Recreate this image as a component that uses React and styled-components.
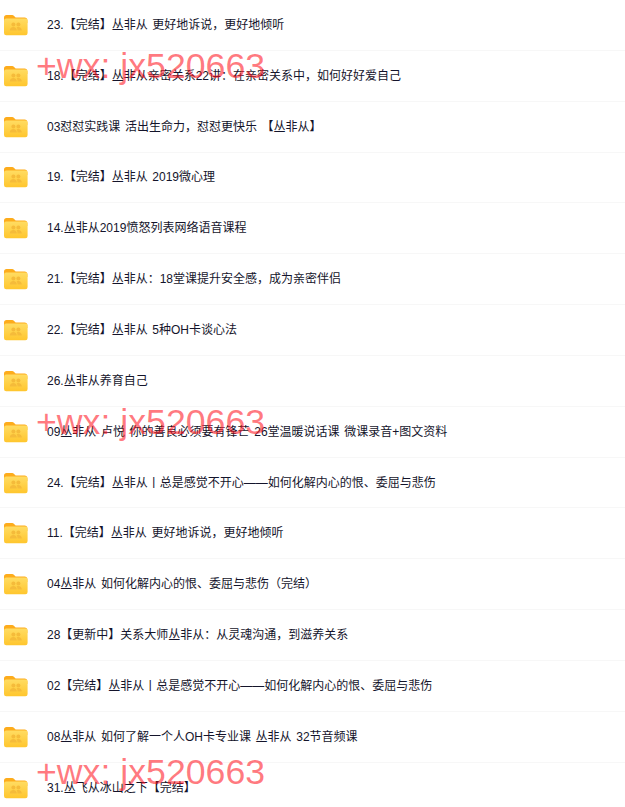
import React from 'react';
import styled, { createGlobalStyle } from 'styled-components';

const GlobalStyle = createGlobalStyle`
  html, body {
    margin: 0;
    padding: 0;
    background: #fff;
    overflow: hidden;
  }
`;

const ITEMS = [
  '23.【完结】丛非从 更好地诉说，更好地倾听',
  '18.【完结】丛非从亲密关系22讲：在亲密关系中，如何好好爱自己',
  '03怼怼实践课 活出生命力，怼怼更快乐 【丛非从】',
  '19.【完结】丛非从 2019微心理',
  '14.丛非从2019愤怒列表网络语音课程',
  '21.【完结】丛非从：18堂课提升安全感，成为亲密伴侣',
  '22.【完结】丛非从 5种OH卡谈心法',
  '26.丛非从养育自己',
  '09丛非从 卢悦 你的善良必须要有锋芒 26堂温暖说话课 微课录音+图文资料',
  '24.【完结】丛非从丨总是感觉不开心——如何化解内心的恨、委屈与悲伤',
  '11.【完结】丛非从 更好地诉说，更好地倾听',
  '04丛非从 如何化解内心的恨、委屈与悲伤（完结）',
  '28【更新中】关系大师丛非从：从灵魂沟通，到滋养关系',
  '02【完结】丛非从丨总是感觉不开心——如何化解内心的恨、委屈与悲伤',
  '08丛非从 如何了解一个人OH卡专业课 丛非从 32节音频课',
  '31.丛飞从冰山之下【完结】',
];

const Page = styled.div`
  position: relative;
  width: 625px;
  height: 807px;
  overflow: hidden;
  background: #fff;
  font-family: "Liberation Sans", "Noto Sans CJK SC", sans-serif;
`;

const List = styled.ul`
  list-style: none;
  margin: 0;
  padding: 0;
`;

const Row = styled.li`
  display: flex;
  align-items: center;
  gap: 19px;
  height: 50.85px;
  box-sizing: border-box;
  padding-left: 3px;
  border-bottom: 1px solid #f7f7f7;
`;

const Name = styled.span`
  font-size: 12px;
  line-height: 18px;
  word-spacing: 1.3px;
  color: #14142b;
  white-space: nowrap;
`;

const Watermark = styled.div`
  position: absolute;
  left: 36px;
  top: ${p => p.$top}px;
  font-size: 35.7px;
  line-height: 40px;
  color: rgba(255, 20, 30, 0.58);
  white-space: nowrap;
  pointer-events: none;
`;

const FolderIcon = ({ id }) => (
  <svg width="25" height="22" viewBox="0 0 25 22">
    <defs>
      <linearGradient id={id} x1="0" y1="0" x2="0" y2="1">
        <stop offset="0" stopColor="#ffdc62" />
        <stop offset="1" stopColor="#ffc62e" />
      </linearGradient>
    </defs>
    <path d="M1 3.5C1 2 2 1 3.5 1h5.6c.8 0 1.4.3 2 .9L12.6 3.4h9C23.2 3.4 24.4 4.6 24.4 6v3H1z" fill="#fdac1c" />
    <rect x="1" y="4.6" width="23.6" height="16.6" rx="2.2" fill={`url(#${id})`} />
    <circle cx="10.4" cy="10.6" r="2" fill="#f5bb3a" />
    <circle cx="15.4" cy="10.6" r="2" fill="#f5bb3a" />
    <path d="M6.8 16.4c0-2 1.6-3.3 3.6-3.3s3.4 1.3 3.4 3.3zM14.6 16.4c0-1.2-.3-2.2-1-3 .6-.2 1.2-.3 1.8-.3 2 0 3.4 1.3 3.4 3.3z" fill="#f5bb3a" />
  </svg>
);

export default function App() {
  return (
    <Page>
      <GlobalStyle />
      <List>
        {ITEMS.map((name, i) => (
          <Row key={name}>
            <FolderIcon id={`folder-${i}`} />
            <Name>{name}</Name>
          </Row>
        ))}
      </List>
      <Watermark $top={46}>+wx: jx520663</Watermark>
      <Watermark $top={402}>+wx: jx520663</Watermark>
      <Watermark $top={752}>+wx: jx520663</Watermark>
    </Page>
  );
}
